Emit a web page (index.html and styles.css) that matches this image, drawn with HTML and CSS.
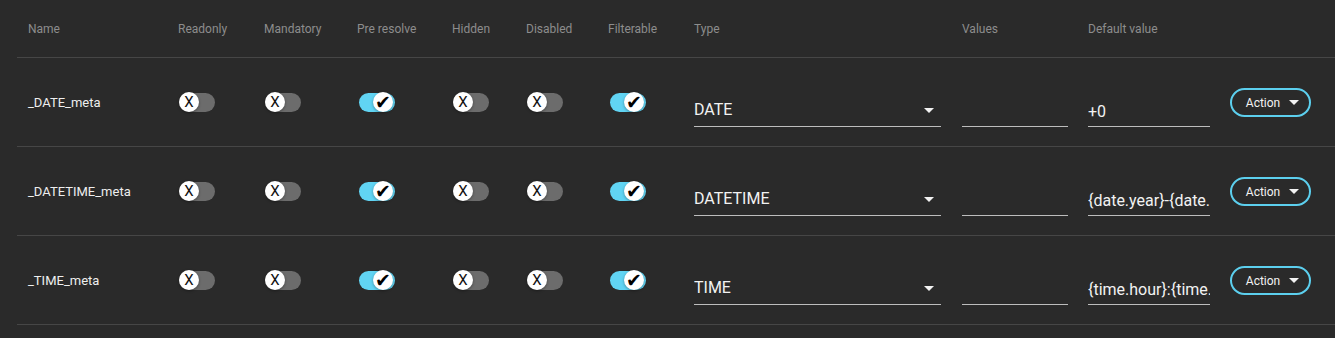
FILE: index.html
```html
<!DOCTYPE html>
<html lang="en">
<head>
    <meta charset="UTF-8">
    <title>Meta fields</title>
    <link rel="stylesheet" href="styles.css">
</head>
<body>
    <div class="field-table">
        <div class="field-row field-head">
            <div>Name</div>
            <div>Readonly</div>
            <div>Mandatory</div>
            <div>Pre resolve</div>
            <div>Hidden</div>
            <div>Disabled</div>
            <div>Filterable</div>
            <div>Type</div>
            <div>Values</div>
            <div>Default value</div>
            <div></div>
        </div>

        <div class="field-row">
            <div class="field-name">_DATE_meta</div>
            <div><span class="toggle"><span class="knob">X</span></span></div>
            <div><span class="toggle"><span class="knob">X</span></span></div>
            <div><span class="toggle on"><span class="knob">✔</span></span></div>
            <div><span class="toggle"><span class="knob">X</span></span></div>
            <div><span class="toggle"><span class="knob">X</span></span></div>
            <div><span class="toggle on"><span class="knob">✔</span></span></div>
            <div><div class="select type-select"><span>DATE</span><span class="caret"></span></div></div>
            <div><input class="input values-input" value=""></div>
            <div><input class="input default-input" value="+0"></div>
            <div><button class="action-button">Action <span class="caret small"></span></button></div>
        </div>

        <div class="field-row">
            <div class="field-name">_DATETIME_meta</div>
            <div><span class="toggle"><span class="knob">X</span></span></div>
            <div><span class="toggle"><span class="knob">X</span></span></div>
            <div><span class="toggle on"><span class="knob">✔</span></span></div>
            <div><span class="toggle"><span class="knob">X</span></span></div>
            <div><span class="toggle"><span class="knob">X</span></span></div>
            <div><span class="toggle on"><span class="knob">✔</span></span></div>
            <div><div class="select type-select"><span>DATETIME</span><span class="caret"></span></div></div>
            <div><input class="input values-input" value=""></div>
            <div><input class="input default-input" value="{date.year}-{date.month}-{date.day}"></div>
            <div><button class="action-button">Action <span class="caret small"></span></button></div>
        </div>

        <div class="field-row">
            <div class="field-name">_TIME_meta</div>
            <div><span class="toggle"><span class="knob">X</span></span></div>
            <div><span class="toggle"><span class="knob">X</span></span></div>
            <div><span class="toggle on"><span class="knob">✔</span></span></div>
            <div><span class="toggle"><span class="knob">X</span></span></div>
            <div><span class="toggle"><span class="knob">X</span></span></div>
            <div><span class="toggle on"><span class="knob">✔</span></span></div>
            <div><div class="select type-select"><span>TIME</span><span class="caret"></span></div></div>
            <div><input class="input values-input" value=""></div>
            <div><input class="input default-input" value="{time.hour}:{time.minute}"></div>
            <div><button class="action-button">Action <span class="caret small"></span></button></div>
        </div>
    </div>
</body>
</html>
```

FILE: styles.css
```css
body {
    margin: 0;
    background: #2a2a2a;
    font-family: Roboto, 'Liberation Sans', sans-serif;
    color: #ececec;
    overflow: hidden;
}

.field-table {
    margin-left: 17px;
}

.field-row {
    display: grid;
    grid-template-columns: 150px 86px 93px 95px 74px 82px 86px 268px 126px 142px 1fr;
    align-items: center;
    height: 88px;
    padding-left: 11px;
    border-bottom: 1px solid #464646;
}

.field-head {
    height: 57px;
    font-size: 12px;
    color: #8d8d8d;
}

.field-head > div {
    margin-top: 1px;
}

.field-name {
    font-size: 13px;
    color: #eeeeee;
}

.toggle {
    position: relative;
    display: block;
    width: 36px;
    height: 19px;
    border-radius: 10px;
    background: #6c6c6c;
    margin-left: 1px;
}

.toggle.on {
    background: #61d4f3;
    margin-left: 2px;
}

.knob {
    position: absolute;
    top: -1px;
    left: 0;
    width: 20px;
    height: 20px;
    border-radius: 50%;
    background: #ffffff;
    color: #111111;
    font-size: 15px;
    line-height: 21px;
    text-align: center;
    box-shadow: 0 1px 3px rgba(0, 0, 0, 0.35);
}

.toggle.on .knob {
    left: 14px;
    font-family: 'DejaVu Sans', sans-serif;
    font-size: 19px;
    line-height: 20px;
    color: #000000;
}

.select,
.input {
    box-sizing: border-box;
    height: 32px;
    margin: 18px 0 0 0;
    padding: 5px 0 0 0;
    border: none;
    border-bottom: 1px solid #bdbdbd;
    background: transparent;
    font-family: Roboto, 'Liberation Sans', sans-serif;
    font-size: 16px;
    color: #f2f2f2;
    white-space: nowrap;
    overflow: hidden;
    outline: none;
    display: block;
}

.input {
    padding-top: 2px;
}

.type-select {
    width: 247px;
    display: flex;
    justify-content: space-between;
}

.values-input {
    width: 106px;
}

.default-input {
    width: 122px;
}

.caret {
    display: inline-block;
    width: 0;
    height: 0;
    margin: 8px 7px 0 0;
    border-left: 5px solid transparent;
    border-right: 5px solid transparent;
    border-top: 5px solid #f2f2f2;
}

.caret.small {
    margin: 0 0 2px 6px;
    vertical-align: middle;
}

.action-button {
    box-sizing: border-box;
    width: 81px;
    height: 29px;
    padding: 0 0 0 4px;
    border: 2px solid #5ccfee;
    border-radius: 15px;
    background: transparent;
    color: #f2f2f2;
    font-family: Roboto, 'Liberation Sans', sans-serif;
    font-size: 12px;
    margin-top: 1px;
}
```
